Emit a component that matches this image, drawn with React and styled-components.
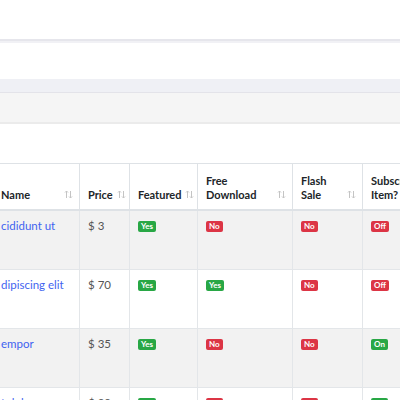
import styled, { createGlobalStyle } from 'styled-components';

const rows = [
  { name: 'cididunt ut', price: 3, featured: true, free: false, flash: false, sub: false },
  { name: 'dipiscing elit', price: 70, featured: true, free: true, flash: false, sub: false },
  { name: 'empor', price: 35, featured: true, free: false, flash: false, sub: true },
  { name: 't dolor', price: 99, featured: true, free: false, flash: false, sub: true },
];

const columns = [
  { key: 'name', label: 'Name', width: 87 },
  { key: 'price', label: 'Price', width: 50 },
  { key: 'featured', label: 'Featured', width: 68 },
  { key: 'free', label: 'Free Download', width: 95 },
  { key: 'flash', label: 'Flash Sale', width: 70 },
  { key: 'sub', label: 'Subscription Item?', width: 110 },
];

const SortIcon = () => (
  <SortSvg width="9" height="9" viewBox="0 0 9 9">
    <path d="M2.5 8V1M1 2.5l1.5-1.5 1.5 1.5" fill="none" stroke="#c4c4c4" strokeWidth="1" />
    <path d="M6.5 1v7M5 6.5l1.5 1.5 1.5-1.5" fill="none" stroke="#c4c4c4" strokeWidth="1" />
  </SortSvg>
);

const App = () => {
  return (
    <>
      <GlobalStyle />
      <Page>
        <TopBar />
        <Toolbar />
        <TabStrip />
        <FilterBar />
        <TableWrap>
          <Table>
            <colgroup>
              {columns.map((col) => (
                <col key={col.key} style={{ width: col.width }} />
              ))}
            </colgroup>
            <thead>
              <tr>
                {columns.map((col) => (
                  <Th key={col.key}>
                    <HeadInner>
                      <HeadLabel>{col.label}</HeadLabel>
                      <SortIcon />
                    </HeadInner>
                  </Th>
                ))}
              </tr>
            </thead>
            <tbody>
              {rows.map((row, index) => (
                <Row key={index} $striped={index % 2 === 0}>
                  <Td>
                    <NameLink href="#">{row.name}</NameLink>
                  </Td>
                  <Td>
                    <Price>$ {row.price}</Price>
                  </Td>
                  <Td>
                    <Badge $on={row.featured}>{row.featured ? 'Yes' : 'No'}</Badge>
                  </Td>
                  <Td>
                    <Badge $on={row.free}>{row.free ? 'Yes' : 'No'}</Badge>
                  </Td>
                  <Td>
                    <Badge $on={row.flash}>{row.flash ? 'Yes' : 'No'}</Badge>
                  </Td>
                  <Td>
                    <Badge $on={row.sub}>{row.sub ? 'On' : 'Off'}</Badge>
                  </Td>
                </Row>
              ))}
            </tbody>
          </Table>
        </TableWrap>
      </Page>
    </>
  );
};

const GlobalStyle = createGlobalStyle`
  body {
    margin: 0;
    background: #fff;
    font-family: Lato, "Open Sans", sans-serif;
  }
`;

const Page = styled.div`
  width: 400px;
  height: 400px;
  overflow: hidden;
  background: #fff;
`;

const TopBar = styled.div`
  height: 39px;
  background: #fff;
  border-bottom: 2px solid #e6e6ec;
  box-shadow: 0 2px 0 #f1f1f5;
`;

const Toolbar = styled.div`
  height: 36px;
  margin-top: 2px;
  background: #fff;
`;

const TabStrip = styled.div`
  height: 13px;
  background: #eff0f5;
  border-bottom: 1px solid #e3e3e9;
`;

const FilterBar = styled.div`
  height: 29px;
  background: #f5f5f5;
  border-bottom: 2px solid #ebebeb;
`;

const TableWrap = styled.div`
  margin-top: 39px;
  overflow: hidden;
`;

const Table = styled.table`
  margin-left: -8px;
  border-collapse: collapse;
  table-layout: fixed;
  width: 480px;
  font-size: 11px;
  color: #212529;
`;

const Th = styled.th`
  height: 38px;
  padding: 0 6px 7px 8px;
  border: 1px solid #dee2e6;
  border-bottom: 2px solid #dee2e6;
  vertical-align: bottom;
  text-align: left;
  font-weight: 700;
  font-size: 11px;
  line-height: 14px;
`;

const HeadInner = styled.div`
  display: flex;
  align-items: flex-end;
  justify-content: space-between;
  gap: 4px;
`;

const HeadLabel = styled.span`
  max-width: 60px;
`;

const SortSvg = styled.svg`
  flex-shrink: 0;
  margin-bottom: 3px;
`;

const Row = styled.tr`
  height: 59px;
  background: ${({ $striped }) => ($striped ? '#f2f2f2' : '#fff')};
`;

const Td = styled.td`
  padding: 8px 8px 0;
  border: 1px solid #e3e6e9;
  vertical-align: top;
  line-height: 14px;
  white-space: nowrap;
  overflow: hidden;
`;

const NameLink = styled.a`
  color: #3f63f0;
  text-decoration: none;
  font-size: 11.5px;
`;

const Price = styled.span`
  color: #555;
  font-size: 11.5px;
`;

const Badge = styled.span`
  display: inline-block;
  margin-top: 2px;
  padding: 0 3px;
  height: 11px;
  line-height: 11px;
  border-radius: 2px;
  font-size: 8px;
  font-weight: 700;
  color: #fff;
  vertical-align: top;
  background: ${({ $on }) => ($on ? '#28a745' : '#dc3545')};
`;

export default App;
